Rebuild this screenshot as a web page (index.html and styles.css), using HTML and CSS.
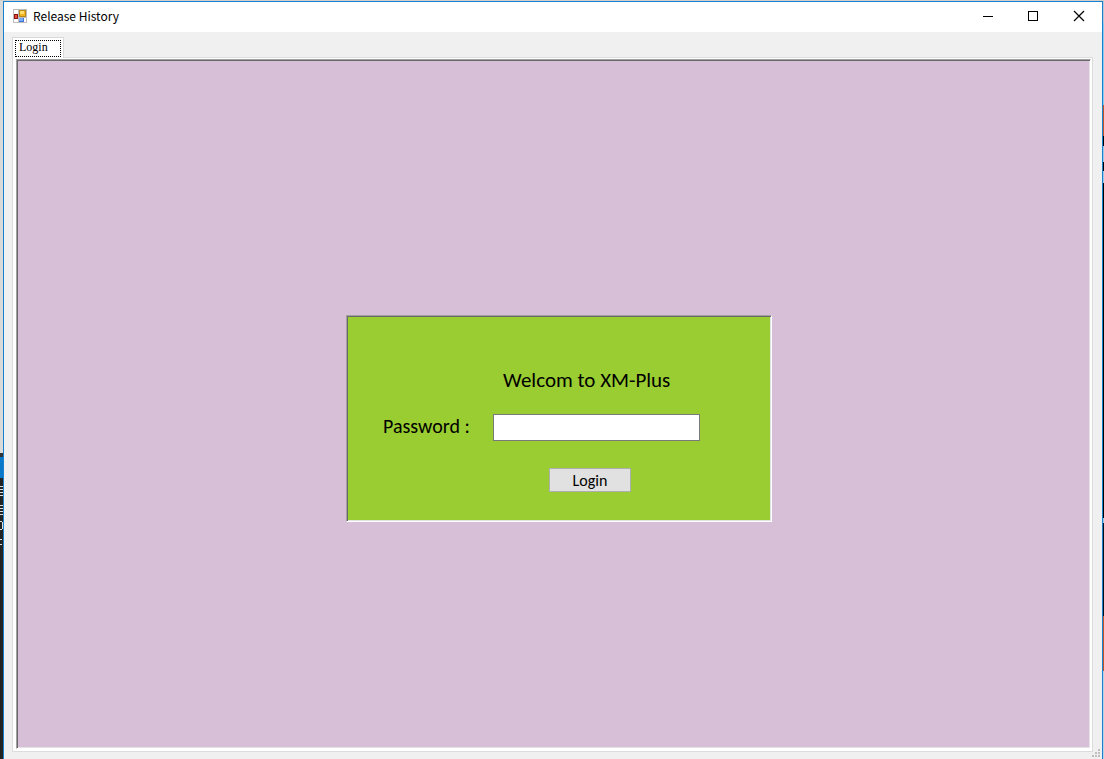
FILE: index.html
```html
<!DOCTYPE html>
<html lang="en">
<head>
<meta charset="utf-8">
<title>Release History</title>
<link rel="stylesheet" href="styles.css">
</head>
<body>
<div class="desktop">
  <div class="strip-left"></div>
  <div class="window">
    <header class="titlebar">
      <svg class="app-icon" width="14" height="14" viewBox="0 0 14 14" shape-rendering="crispEdges" aria-hidden="true">
        <rect width="14" height="14" fill="#bdbdbd"/>
        <rect x="1" y="1" width="4" height="4" fill="#fff"/>
        <rect x="1" y="10" width="4" height="3" fill="#fff"/>
        <rect x="11" y="9" width="2" height="4" fill="#fff"/>
        <rect x="6" y="1" width="7" height="7" fill="#b98a1a"/>
        <rect x="7" y="2" width="5" height="5" fill="#f5b51c"/>
        <rect x="7" y="2" width="4" height="3" fill="#ffdc70"/>
        <rect x="1" y="5" width="4" height="5" fill="#8e1010"/>
        <rect x="2" y="6" width="2" height="3" fill="#e0503c"/>
        <rect x="6" y="9" width="5" height="4" fill="#3f76d8"/>
        <rect x="6" y="9" width="4" height="3" fill="#78aaf5"/>
      </svg>
      <h1 class="title">Release History</h1>
      <div class="controls">
        <button type="button" class="control" aria-label="Minimize"><svg width="12" height="12" viewBox="0 0 12 12" shape-rendering="crispEdges"><path d="M2 6.500h10" stroke="#000"/></svg></button>
        <button type="button" class="control" aria-label="Maximize"><svg width="12" height="12" viewBox="0 0 12 12" shape-rendering="crispEdges"><path d="M1.500 1.500h9v9h-9z" fill="none" stroke="#000"/></svg></button>
        <button type="button" class="control" aria-label="Close"><svg width="12" height="12" viewBox="0 0 12 12"><path d="M1 1l10 10M11 1L1 11" fill="none" stroke="#000" stroke-width="1.200"/></svg></button>
      </div>
    </header>
    <main class="client">
      <div class="tabs" role="tablist"><button type="button" class="tab" role="tab" aria-selected="true">Login</button></div>
      <section class="page">
        <div class="panel">
          <form class="login">
            <h2 class="welcome">Welcom to XM-Plus</h2>
            <label class="label" for="password">Password :</label>
            <input class="field" id="password" type="password">
            <button type="button" class="submit">Login</button>
          </form>
        </div>
      </section>
    </main>
    <svg class="grip" width="8" height="8" viewBox="0 0 8 8" shape-rendering="crispEdges" aria-hidden="true"><path d="M6 0h2v2h-2zM3 3h2v2h-2zM6 3h2v2h-2zM0 6h2v2h-2zM3 6h2v2h-2zM6 6h2v2h-2z" fill="#bfbfbf"/></svg>
  </div>
  <div class="strip-right"></div>
</div>
</body>
</html>
```
FILE: styles.css
```css
* { box-sizing: border-box; }
body { margin: 0; }
.desktop {
  display: flex;
  height: 100vh;
  padding-top: 1px;
  background: #d0cfcb;
  overflow: hidden;
}
.strip-left {
  flex: 0 0 3px;
  background:
    repeating-linear-gradient(#ddd 0 1px, #222 1px 3px) 0 485px / 3px 12px no-repeat,
    repeating-linear-gradient(#ddd 0 1px, #222 1px 3px) 0 504px / 3px 11px no-repeat,
    linear-gradient(#ddd, #ddd) 0 520px / 2px 1px no-repeat,
    linear-gradient(#ddd, #ddd) 2px 521px / 1px 7px no-repeat,
    linear-gradient(#ddd, #ddd) 0 528px / 2px 1px no-repeat,
    linear-gradient(#ddd, #ddd) 0 538px / 2px 1px no-repeat,
    linear-gradient(#ddd, #ddd) 0 543px / 2px 1px no-repeat,
    linear-gradient(#dadada 0 452px, #333 452px 456px, #0878c8 456px 477px, #222 477px);
}
.strip-right {
  flex: 0 0 1px;
  background: linear-gradient(#b8c8d4 0 22px, #8ccbf0 22px 104px, #bd5526 104px 135px, #000 135px 145px, #9cc9e8 145px 161px, #000 161px 170px, #9cc9e8 170px 182px, #000 182px 517px, #9cc9e8 517px 522px, #001018 522px 615px, #bd5526 615px 670px, #b9d3e3 670px);
}
.window {
  position: relative;
  flex: 1;
  display: flex;
  flex-direction: column;
  border: 1px solid #1980d0;
  border-bottom: 0;
  background: #f0f0f0;
}
.titlebar {
  display: flex;
  align-items: center;
  height: 30px;
  padding: 0 0 2px 9px;
  background: #fff;
}
.title {
  margin: 0 0 0 6px;
  font: 400 12px/16px "Noto Sans CJK TC", "Noto Sans", sans-serif;
  color: #000;
}
.controls { display: flex; margin-left: auto; }
.control {
  display: flex;
  align-items: center;
  justify-content: center;
  width: 46px;
  height: 28px;
  padding: 0;
  border: 0;
  background: none;
}
.client {
  flex: 1;
  display: flex;
  flex-direction: column;
  padding: 5px 9px 7px 8px;
}
.tabs { display: flex; }
.tab {
  position: relative;
  width: 52px;
  height: 21px;
  margin-bottom: -1px;
  padding: 0 0 3px 6px;
  border: 1px solid #d9d9d9;
  border-bottom: 0;
  background: #fff;
  font: 12px/16px "Liberation Serif", serif;
  text-align: left;
  color: #000;
}
.tab::after {
  content: "";
  position: absolute;
  inset: 2px 2px 1px 2px;
  border: 1px dotted #000;
}
.page {
  flex: 1;
  display: flex;
  padding: 1px 1px 2px 3px;
  border: 1px solid #dcdcdc;
  background: #fff;
}
.panel, .login {
  border: 1px solid;
  border-color: #a0a0a0 #fff #fff #a0a0a0;
  box-shadow: inset 1px 1px #696969, inset -1px -1px #e3e3e3;
}
.panel {
  flex: 1;
  display: flex;
  align-items: center;
  justify-content: center;
  padding: 28px 0 0 11px;
  background-color: #d8bfd8;
}
.login {
  display: grid;
  grid-template-columns: 110px 207px;
  align-items: center;
  padding: 52px 71px 29px 36px;
  background-color: #9acd32;
  font-family: Carlito, Lato, sans-serif;
  color: #000;
}
.welcome {
  grid-column: 2;
  margin: 0 0 21px 10px;
  font-size: 21px;
  line-height: 25px;
  font-weight: 400;
  white-space: nowrap;
}
.label { font-size: 20px; line-height: 24px; padding-bottom: 2px; }
.field {
  width: 100%;
  height: 27px;
  padding: 2px 4px;
  border: 1px solid #7a7a7a;
  border-radius: 0;
  background: #fff;
  font: inherit;
  outline: 0;
}
.submit {
  grid-column: 2;
  width: 82px;
  height: 24px;
  margin: 27px 0 0 56px;
  padding: 2px 0 0;
  border: 1px solid #adadad;
  background: #e1e1e1;
  font-family: inherit;
  font-size: 16px;
  line-height: 20px;
  color: #000;
}
.grip { position: absolute; right: 2px; bottom: 2px; }
```
